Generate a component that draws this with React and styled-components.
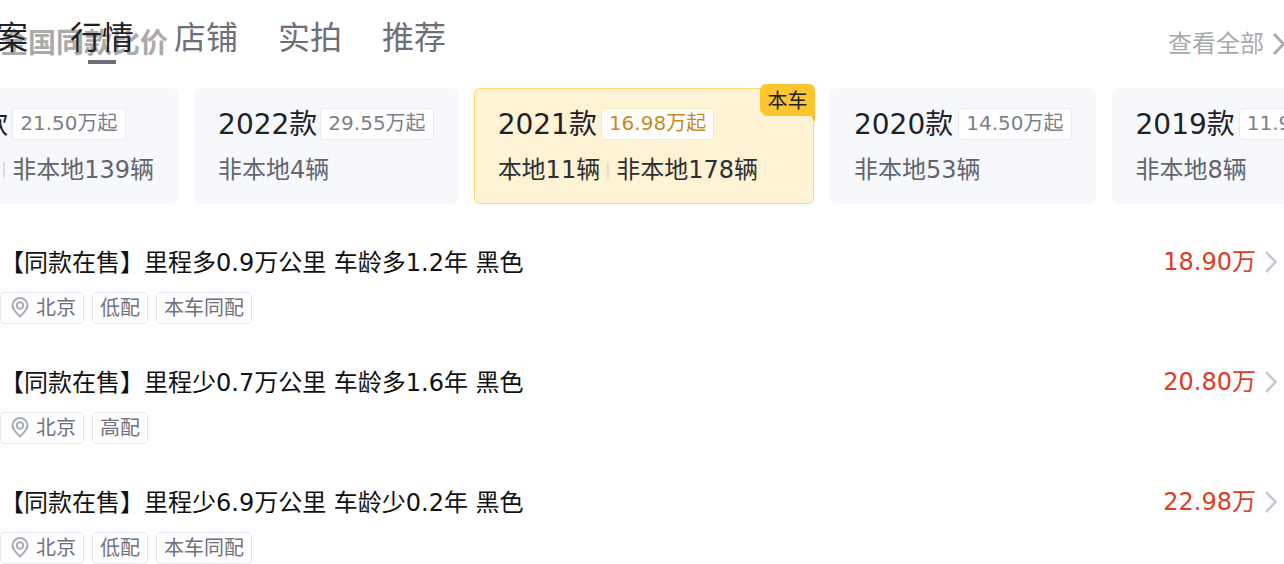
import styled, { createGlobalStyle } from "styled-components";

const GlobalStyle = createGlobalStyle`
  html, body {
    margin: 0;
    padding: 0;
    height: 564px;
    overflow: hidden;
    background: #fff;
    font-family: "DejaVu Sans", "Noto Sans CJK SC", sans-serif;
  }
`;

const Page = styled.div`
  width: 1284px;
  height: 564px;
  overflow: hidden;
`;

const Header = styled.div`
  position: relative;
  height: 88px;
  display: flex;
  align-items: flex-start;
`;

const StickyTitle = styled.div`
  position: absolute;
  left: 0;
  top: 24px;
  font-size: 28px;
  line-height: 40px;
  font-weight: 700;
  color: #aaaaaa;
`;

const Tabs = styled.div`
  position: relative;
  display: flex;
  gap: 40px;
  margin-left: -36px;
`;

const Tab = styled.div`
  position: relative;
  font-size: 32px;
  line-height: 44px;
  padding-top: 16px;
  color: ${({ $active }) => ($active ? "#1f2129" : "#6e7079")};
  &:first-child {
    margin-right: 2px;
  }
  &::after {
    content: "";
    display: ${({ $underline }) => ($underline ? "block" : "none")};
    position: absolute;
    left: 18px;
    top: 60px;
    width: 28px;
    height: 4px;
    background: #6e6e78;
  }
`;

const ViewAll = styled.div`
  position: absolute;
  right: -1px;
  top: 24px;
  display: flex;
  align-items: center;
  gap: 8px;
  font-size: 24px;
  line-height: 40px;
  color: #aaaaaa;
`;

const Strip = styled.div`
  display: flex;
  gap: 16px;
  margin-left: -115px;
  width: max-content;
`;

const Card = styled.div`
  position: relative;
  box-sizing: border-box;
  height: 116px;
  padding: 19px ${({ $current }) => ($current ? "55px" : "23px")} 0 23px;
  border-radius: 6px;
  background: ${({ $current }) => ($current ? "#fff3d6" : "#f6f8fc")};
  border: 1px solid ${({ $current }) => ($current ? "#fbd96a" : "#f6f8fc")};
  color: #1f2129;
`;

const Badge = styled.div`
  position: absolute;
  right: -2px;
  top: -5px;
  width: 55px;
  height: 32px;
  text-align: center;
  font-size: 20px;
  line-height: 34px;
  color: #1f2129;
  background: #fdc62f;
  border-radius: 6px 6px 0 8px;
  &::after {
    content: "";
    position: absolute;
    right: 0;
    top: 32px;
    width: 4px;
    height: 6px;
    background: #f2b92a;
    clip-path: polygon(0 0, 100% 0, 100% 100%);
  }
`;

const YearRow = styled.div`
  display: flex;
  align-items: center;
  gap: ${({ $gap }) => $gap}px;
  height: 32px;
`;

const Year = styled.div`
  font-size: 28px;
  line-height: 32px;
  padding-top: 2px;
  white-space: nowrap;
`;

const Price = styled.div`
  box-sizing: border-box;
  height: 32px;
  padding: 0 7px;
  border: 1px solid ${({ $current }) => ($current ? "#fdeab3" : "#e9ebf0")};
  border-radius: 4px;
  background: #fff;
  font-size: 20px;
  line-height: 28px;
  white-space: nowrap;
  color: ${({ $current }) => ($current ? "#c98a1c" : "#7c7f8a")};
`;

const Stock = styled.div`
  display: flex;
  align-items: center;
  margin-top: 14px;
  font-size: 24px;
  line-height: 32px;
  white-space: nowrap;
  color: ${({ $current }) => ($current ? "#2e2e30" : "#62656f")};
`;

const Divider = styled.span`
  width: 2px;
  height: 16px;
  margin: 0 7px;
  background: ${({ $current }) => ($current ? "#e8dfc8" : "#dcdee3")};
`;

const List = styled.div`
  margin-top: 36px;
`;

const Row = styled.div`
  height: 120px;
`;

const RowTop = styled.div`
  display: flex;
  justify-content: space-between;
  align-items: center;
  height: 44px;
`;

const RowTitle = styled.div`
  font-size: 24px;
  line-height: 44px;
  padding-top: 1px;
  color: #111;
  white-space: nowrap;
`;

const RowPrice = styled.div`
  display: flex;
  align-items: center;
  gap: 8px;
  padding-right: 7px;
  font-size: 24px;
  line-height: 44px;
  color: #e03c22;
`;

const Tags = styled.div`
  display: flex;
  gap: 8px;
  margin-top: 8px;
`;

const Tag = styled.div`
  display: flex;
  align-items: center;
  gap: 6px;
  box-sizing: border-box;
  height: 32px;
  padding: 0 7px 3px;
  border: 1px solid #e6e8ee;
  border-radius: 4px;
  font-size: 20px;
  color: #6e717c;
  white-space: nowrap;
`;

const Chevron = ({ color }) => (
  <svg width="13" height="24" viewBox="0 0 13 24" fill="none">
    <path d="M2 2 L11.5 12 L2 22" stroke={color} strokeWidth="2.8" />
  </svg>
);

const Pin = () => (
  <svg width="22" height="24" viewBox="0 0 22 24" fill="none">
    <path
      d="M12 21.5 C8.2 18 4.5 14.8 4.5 10.3 C4.5 6.2 7.9 3 12 3 C16.1 3 19.5 6.2 19.5 10.3 C19.5 14.8 15.8 18 12 21.5 Z"
      stroke="#a6abb8"
      strokeWidth="2"
    />
    <circle cx="12" cy="10.5" r="3.2" stroke="#a6abb8" strokeWidth="2" />
  </svg>
);

const cards = [
  { year: "2023款", price: "21.50万起", local: "本地5辆", other: "非本地139辆", gap: 4 },
  { year: "2022款", price: "29.55万起", other: "非本地4辆", gap: 3 },
  { year: "2021款", price: "16.98万起", local: "本地11辆", other: "非本地178辆", current: true, gap: 4 },
  { year: "2020款", price: "14.50万起", other: "非本地53辆", gap: 5 },
  { year: "2019款", price: "11.98万起", other: "非本地8辆", gap: 4 },
];

const rows = [
  { title: "【同款在售】里程多0.9万公里 车龄多1.2年 黑色", price: "18.90万", tags: ["低配", "本车同配"] },
  { title: "【同款在售】里程少0.7万公里 车龄多1.6年 黑色", price: "20.80万", tags: ["高配"] },
  { title: "【同款在售】里程少6.9万公里 车龄少0.2年 黑色", price: "22.98万", tags: ["低配", "本车同配"] },
];

export default function App() {
  return (
    <Page>
      <GlobalStyle />
      <Header>
        <StickyTitle>全国同款比价</StickyTitle>
        <Tabs>
          <Tab $active>档案</Tab>
          <Tab $active $underline>行情</Tab>
          <Tab>店铺</Tab>
          <Tab>实拍</Tab>
          <Tab>推荐</Tab>
        </Tabs>
        <ViewAll>
          查看全部
          <Chevron color="#aaaaaa" />
        </ViewAll>
      </Header>
      <Strip>
        {cards.map((card) => (
          <Card key={card.year} $current={card.current}>
            {card.current && <Badge>本车</Badge>}
            <YearRow $gap={card.gap}>
              <Year>{card.year}</Year>
              <Price $current={card.current}>{card.price}</Price>
            </YearRow>
            <Stock $current={card.current}>
              {card.local}
              {card.local && <Divider $current={card.current} />}
              {card.other}
            </Stock>
          </Card>
        ))}
      </Strip>
      <List>
        {rows.map((row) => (
          <Row key={row.title}>
            <RowTop>
              <RowTitle>{row.title}</RowTitle>
              <RowPrice>
                {row.price}
                <Chevron color="#c9ccd4" />
              </RowPrice>
            </RowTop>
            <Tags>
              <Tag>
                <Pin />
                北京
              </Tag>
              {row.tags.map((tag) => (
                <Tag key={tag}>{tag}</Tag>
              ))}
            </Tags>
          </Row>
        ))}
      </List>
    </Page>
  );
}
